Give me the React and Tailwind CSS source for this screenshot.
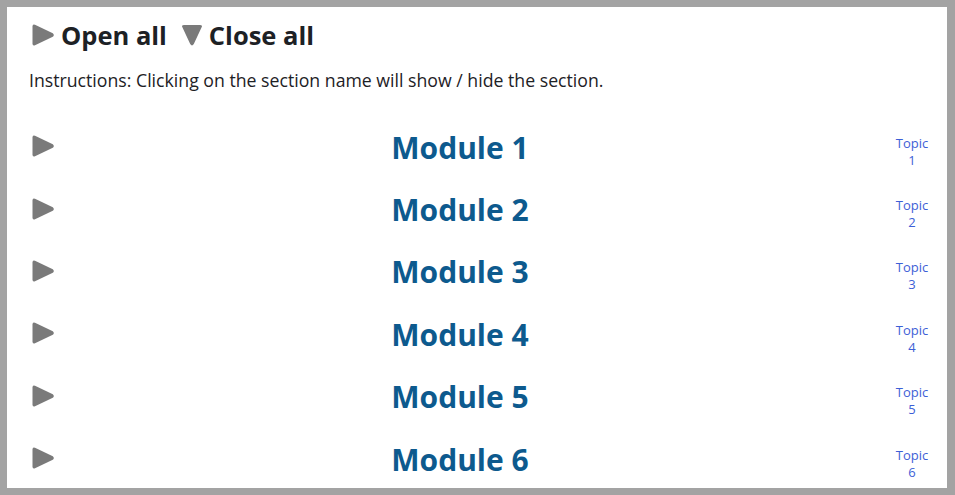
import React from "react";

const Tri = ({ down = false, className = "" }) => (
  <svg width="24" height="24" viewBox="0 0 24 24" className={className}>
    {down ? (
      <path d="M2.5 4.5 Q1 2 4 2 L20 2 Q23 2 21.5 4.5 L13.8 21 Q12 23.8 10.2 21 Z" fill="#7a7a7a" />
    ) : (
      <path d="M1.5 3.5 Q1.5 0.8 4 1.8 L21.8 10.2 Q23.8 12 21.8 13.8 L4 22.2 Q1.5 23.2 1.5 20.5 Z" fill="#7a7a7a" />
    )}
  </svg>
);

export default function App() {
  const mods = [1, 2, 3, 4, 5, 6];
  return (
    <div
      className="w-[955px] h-[495px] bg-[#a3a3a3] pt-[7px] pl-[7px] pr-[8px] pb-[7px] overflow-hidden"
      style={{ fontFamily: '"Open Sans", "Noto Sans", sans-serif' }}
    >
      <div className="bg-white w-full h-full pl-[22px] pr-[10px] pt-[14px] overflow-hidden">
        <div className="flex items-center h-[28px]">
          <Tri className="ml-[2px]" />
          <span className="ml-[6px] text-[25.5px] font-bold text-[#1d2125]">Open all</span>
          <Tri down className="ml-[13px]" />
          <span className="ml-[5px] text-[25.5px] font-bold text-[#1d2125]">Close all</span>
        </div>
        <div className="mt-[19px] text-[17.7px] text-[#1d2125] leading-[24px]">
          Instructions: Clicking on the section name will show / hide the section.
        </div>
        <div className="mt-[24px] flex flex-col">
          {mods.map((m) => (
            <div key={m} className="flex items-center h-[62.4px]">
              <div className="w-[42px] pl-[2px] flex items-center -mt-[2px]">
                <Tri />
              </div>
              <div className="flex-1 text-center text-[30px] font-bold text-[#0d5a8e] pr-[38px]">
                Module {m}
              </div>
              <div className="w-[50px] text-center text-[13px] leading-[17px] text-[#3d5fd6] pt-[9px]">
                Topic
                <br />
                {m}
              </div>
            </div>
          ))}
        </div>
      </div>
    </div>
  );
}
